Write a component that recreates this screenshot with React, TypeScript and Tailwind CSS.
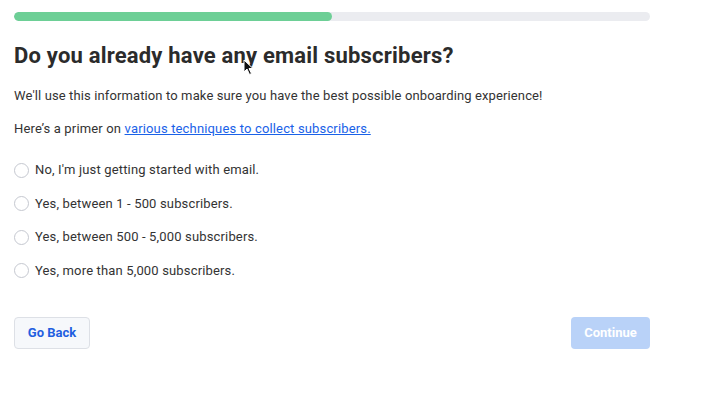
export default function App() {
  const options = [
    "No, I'm just getting started with email.",
    'Yes, between 1 - 500 subscribers.',
    'Yes, between 500 - 5,000 subscribers.',
    'Yes, more than 5,000 subscribers.',
  ];

  return (
    <div className="relative w-[721px] h-[412px] bg-white font-['Roboto',sans-serif] text-[#2b2b2b]">
      <div className="w-[636px] ml-[14px] pt-[12px]">
        <div className="h-[9px] w-full rounded-full bg-[#ebecf0] overflow-hidden">
          <div className="h-full w-1/2 rounded-full bg-[#6dcf96]" />
        </div>

        <h1 className="mt-[20px] text-[22px] leading-[30px] font-bold tracking-[0.009em] text-[#2b2b2b]">
          Do you already have any email subscribers?
        </h1>

        <p className="mt-[16px] text-[13px] leading-[18px] tracking-[0.009em] text-[#333]">
          We'll use this information to make sure you have the best possible onboarding experience!
        </p>
        <p className="mt-[15px] text-[13px] leading-[18px] tracking-[0.012em] text-[#333]">
          Here’s a primer on{' '}
          <a href="#" className="text-[#1a62e8] underline">various techniques to collect subscribers.</a>
        </p>

        <div className="mt-[23px] flex flex-col gap-[15.5px]">
          {options.map((o) => (
            <label key={o} className="flex items-center gap-[6px] h-[18px] text-[13px] tracking-[0.012em] text-[#333]">
              <span className="w-[15px] h-[15px] rounded-full border border-[#c5c8d0] bg-white shrink-0" />
              {o}
            </label>
          ))}
        </div>

        <div className="mt-[37px] flex justify-between">
          <button className="h-[32px] w-[76px] rounded-[4px] border border-[#dde0e6] bg-[#f6f8fb] text-[13px] font-bold text-[#1f5fe0]">
            Go Back
          </button>
          <button className="h-[32px] w-[79px] rounded-[4px] bg-[#b9d2f8] text-[13px] font-bold text-white">
            Continue
          </button>
        </div>
      </div>

      <svg className="absolute left-[243px] top-[59px]" width="11" height="17" viewBox="0 0 11 17">
        <path d="M1 1 L1 13 L4 10 L6.5 15.5 L8.5 14.5 L6 9.5 L10 9.5 Z" fill="#111" stroke="#fff" strokeWidth="1" />
      </svg>
    </div>
  );
}
